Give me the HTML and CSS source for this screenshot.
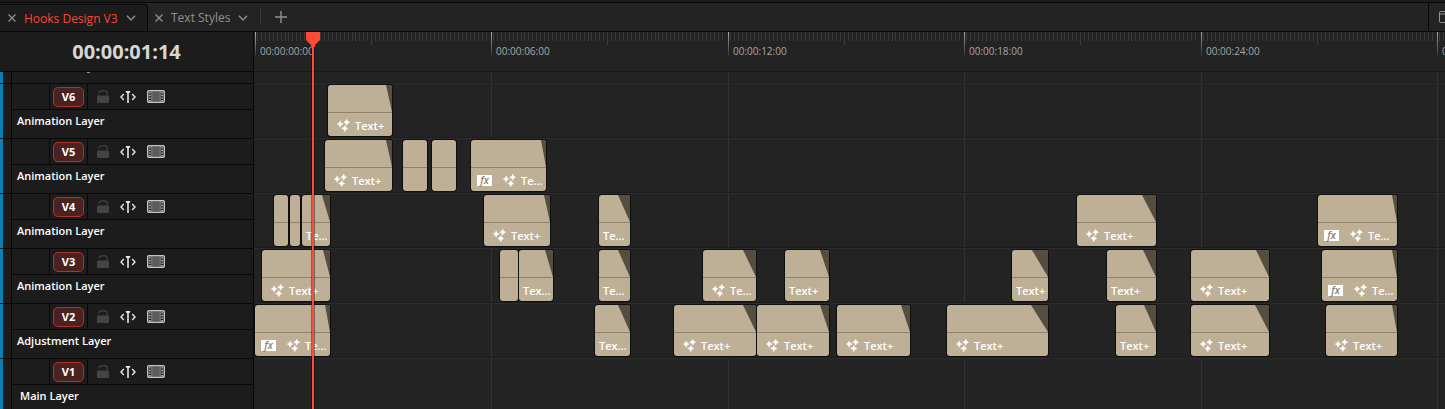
FILE: index.html
```
<!DOCTYPE html>
<html lang="en">
<head>
    <meta charset="UTF-8">
    <title>Timeline</title>
    <link rel="stylesheet" href="styles.css">
</head>
<body>
    <svg class="symbols" aria-hidden="true">
        <symbol id="close" viewBox="0 0 8 8"><path d="M.5 .5l7 7M7.5 .5l-7 7" stroke="currentColor" stroke-width="1.3"/></symbol>
        <symbol id="chevron" viewBox="0 0 10 6"><path d="M1 .8l4 4.2 4-4.2" fill="none" stroke="currentColor" stroke-width="1.3"/></symbol>
        <symbol id="plus" viewBox="0 0 12 12"><path d="M6 0v12M0 6h12" stroke="currentColor" stroke-width="1.4"/></symbol>
        <symbol id="window" viewBox="0 0 16 12"><path d="M.5 1.5a1 1 0 0 1 1-1h13a1 1 0 0 1 1 1v9a1 1 0 0 1-1 1h-13a1 1 0 0 1-1-1zM.5 3h15" fill="none" stroke="currentColor"/></symbol>
        <symbol id="lock" viewBox="0 0 12 13"><rect y="5.500" width="12" height="7.500" rx="1" fill="currentColor"/><path d="M2 3.400C2 1.600 3.200.8 4.500.8h3.500C9.400.8 10.200 1.700 10.200 3v2.500" fill="none" stroke="currentColor" stroke-width="1.2"/></symbol>
        <symbol id="autoselect" viewBox="0 0 16 12"><path d="M3.800 3L1 6l2.800 3M12.200 3L15 6l-2.800 3" fill="none" stroke="currentColor" stroke-width="1.4"/><path d="M5.800 0h4.400v1.200L8.800 2.200V12H7.200V2.200L5.800 1.200z" fill="currentColor"/></symbol>
        <symbol id="film" viewBox="0 0 18 13"><rect x=".7" y=".7" width="16.600" height="11.600" rx="1" fill="#1c1c1c" stroke="#c4c4c4" stroke-width="1.4"/><rect x="5" y="2" width="8" height="9" fill="#5c5c5c"/><path d="M4.700 1v11M13.300 1v11" stroke="#999" stroke-width=".8"/><path d="M2.900 2.200v9M15.100 2.200v9" stroke="#ddd" stroke-width="1.400" stroke-dasharray="1.400 1.200"/></symbol>
        <symbol id="sparkle" viewBox="0 0 13 13"><path id="star" d="M3.100 1.800Q3.600 4.600 6.300 5.100Q3.600 5.600 3.100 8.400Q2.600 5.600 -.1 5.100Q2.600 4.600 3.100 1.800z" fill="#fff" stroke="#fff" stroke-width=".3"/><use href="#star" x="6.600" y="-1.800"/><use href="#star" x="4.700" y="4.500"/></symbol>
    </svg>

    <nav class="tabs">
        <div class="tab active">
            <button aria-label="Close Hooks Design V3"><svg width="8" height="8"><use href="#close"/></svg></button>
            <button class="tab-name">Hooks Design V3</button>
            <button aria-label="Hooks Design V3 menu"><svg width="10" height="6"><use href="#chevron"/></svg></button>
        </div>
        <div class="tab">
            <button aria-label="Close Text Styles"><svg width="8" height="8"><use href="#close"/></svg></button>
            <button class="tab-name">Text Styles</button>
            <button aria-label="Text Styles menu"><svg width="10" height="6"><use href="#chevron"/></svg></button>
        </div>
        <button class="add-tab" aria-label="Add timeline"><svg width="12" height="12"><use href="#plus"/></svg></button>
        <div class="tab-tools">
            <button aria-label="Window options"><svg width="16" height="12"><use href="#window"/></svg></button>
        </div>
    </nav>

    <main class="editor">
        <section class="headers">
            <div class="timecode">00:00:01:14</div>
            <div class="header-list" id="headers">
                <div class="header-stub"></div>
            </div>
        </section>
        <section class="timeline" id="timeline">
            <svg class="ruler" id="ruler"></svg>
            <div class="track-stub"></div>
            <div class="tracks" id="tracks"></div>
            <div class="playhead">
                <svg width="16" height="15"><path d="M1 0h14v8l-5 5v2H6v-2L1 8z" fill="#ff4a38"/></svg>
            </div>
        </section>
    </main>

    <script>
        const SECONDS = 6;
        const STEP = 236.5;

        // clip: [start, end, width of the fade, label, icons]
        const tracks = [
            { id: 'V6', name: 'Animation Layer', clips: [
                [74, 138, 6, 'Text+', 'star']
            ] },
            { id: 'V5', name: 'Animation Layer', clips: [
                [71, 138, 6, 'Text+', 'star'], [149, 173], [178, 202], [217, 292, 5, 'Te...', 'fx']
            ] },
            { id: 'V4', name: 'Animation Layer', clips: [
                [20, 34], [36, 46], [48, 76, 8, 'Te...'], [230, 296, 6, 'Text+', 'star'],
                [345, 376, 12, 'Te...'], [823, 902, 14, 'Text+', 'star'], [1064, 1143, 5, 'Te...', 'fx']
            ] },
            { id: 'V3', name: 'Animation Layer', clips: [
                [8, 76, 7, 'Text+', 'star'], [246, 264], [265, 299, 8, 'Tex...'], [345, 376, 12, 'Te...'],
                [449, 502, 13, 'Te...', 'star'], [531, 575, 9, 'Text+'], [758, 794, 16, 'Text+'],
                [853, 902, 13, 'Text+'], [937, 1015, 13, 'Text+', 'star'], [1068, 1143, 5, 'Te...', 'fx']
            ] },
            { id: 'V2', name: 'Adjustment Layer', clips: [
                [1, 76, 5, 'Te...', 'fx'], [341, 376, 12, 'Tex...'], [420, 502, 13, 'Text+', 'star'],
                [503, 575, 9, 'Text+', 'star'], [583, 656, 9, 'Text+', 'star'], [693, 794, 17, 'Text+', 'star'],
                [862, 902, 12, 'Text+'], [937, 1015, 14, 'Text+', 'star'], [1072, 1143, 5, 'Text+', 'star']
            ] },
            { id: 'V1', name: 'Main Layer', main: true, clips: [] }
        ];

        function renderClip([start, end, fade, label, icons]) {
            const fadeHtml = fade ? `<div class="fade" style="width: ${fade}px"></div>` : '';
            const fx = icons === 'fx' ? '<span class="fx">fx</span>' : '';
            const star = icons ? '<svg width="13" height="13"><use href="#sparkle"/></svg>' : '';
            return `
                <div class="clip" style="left: ${start}px; width: ${end - start}px">
                    <div class="clip-body">${fadeHtml}</div>
                    <div class="clip-label ${icons || 'plain'}">${fx}${star}${label ? `<span>${label}</span>` : ''}</div>
                </div>`;
        }

        function renderHeader(track) {
            return `
                <div class="header">
                    <div class="controls">
                        <div class="target"><button>${track.id}</button></div>
                        <div class="toggles">
                            <button class="lock" aria-label="Lock ${track.id}"><svg width="12" height="13"><use href="#lock"/></svg></button>
                            <button aria-label="Auto select ${track.id}"><svg width="16" height="12"><use href="#autoselect"/></svg></button>
                            <button aria-label="Enable ${track.id}"><svg width="18" height="13"><use href="#film"/></svg></button>
                        </div>
                    </div>
                    <div class="name${track.main ? ' main-layer' : ''}">${track.name}</div>
                </div>`;
        }

        function renderRuler() {
            const width = document.getElementById('timeline').clientWidth;
            let html = '<defs><linearGradient id="tick" x2="0" y2="1"><stop stop-color="#aaa"/><stop offset="1" stop-color="#333"/></linearGradient></defs>';
            let lines = '';
            for (let i = 0; i * STEP < width; i++) {
                const x = Math.floor(i * STEP) + 1;
                const seconds = String(i * SECONDS).padStart(2, '0');
                for (let t = 1; t < 60; t++) {
                    const tick = Math.round(x + t * STEP / 60 - 2);
                    html += `<rect class="minor" x="${tick}" width="1" height="${t === 30 ? 13 : 9}"/>`;
                }
                html += `<rect x="${x}" width="1" height="24" fill="url(#tick)"/>`;
                html += `<text x="${x + 5}" y="23">00:00:${seconds}:00</text>`;
                if (i > 0) lines += `<div class="guide" style="left: ${x}px"></div>`;
            }
            document.getElementById('ruler').innerHTML = html;
            return lines;
        }

        document.getElementById('headers').innerHTML += tracks.map(renderHeader).join('');
        document.getElementById('tracks').innerHTML = renderRuler() + tracks.map(track =>
            `<div class="track">${track.clips.map(renderClip).join('')}</div>`).join('');
    </script>
</body>
</html>
```

FILE: styles.css
```
* {
    box-sizing: border-box;
}

body {
    margin: 0;
    height: 100vh;
    display: flex;
    flex-direction: column;
    overflow: hidden;
    background: #232323;
    color: #fff;
    font-family: "Open Sans", "Noto Sans", sans-serif;
    font-size: 12px;
}

button {
    display: flex;
    align-items: center;
    padding: 0;
    border: none;
    background: none;
    color: inherit;
    font: inherit;
    cursor: pointer;
}

svg {
    display: block;
    flex: none;
}

.symbols {
    position: absolute;
    width: 0;
    height: 0;
}

/* tabs */

.tabs {
    flex: none;
    display: flex;
    height: 32px;
    border-top: 2px solid #1c1c1c;
    border-bottom: 1px solid #080808;
    box-shadow: inset 0 1px #080808;
    color: #919191;
}

.tab {
    display: flex;
    align-items: center;
    gap: 8px;
    margin: 2px 0 0;
    padding: 0 10px 0 7px;
}

.tab.active {
    width: 148px;
    padding-left: 8px;
    border: 1px solid #080808;
    border-width: 1px 1px 0 0;
    border-radius: 0 4px 0 0;
    background: #1c1c1c;
}

.tab.active .tab-name {
    color: #ff4435;
}

.tab-name {
    font-weight: 500;
    white-space: nowrap;
}

.add-tab {
    align-self: center;
    height: 17px;
    margin-left: 2px;
    padding-left: 14px;
    border-left: 1px solid #383838;
}

.tab-tools {
    display: flex;
    width: 17px;
    margin-left: auto;
    padding-left: 10px;
    border-left: 1px solid #080808;
    overflow: hidden;
}

/* track headers */

.editor {
    flex: 1;
    display: flex;
    min-height: 0;
}

.headers {
    flex: none;
    display: flex;
    flex-direction: column;
    width: 254px;
    border-right: 1px solid #080808;
    background: #1c1c1c;
}

.timecode {
    height: 40px;
    border-bottom: 1px solid #080808;
    color: #d6d6d6;
    font-size: 20px;
    font-weight: 700;
    line-height: 40px;
    text-align: center;
}

.header-list {
    flex: 1;
    overflow: hidden;
}

.header-stub,
.header {
    padding-left: 11px;
    background: linear-gradient(#0b80b5, #0b80b5) left / 3px 100% no-repeat;
}

.header-stub {
    height: 11px;
}

.header-stub::before {
    content: "";
    display: block;
    height: 100%;
    border-left: 1px solid #080808;
    background: linear-gradient(#999, #999) 75px 0 / 3px 1px no-repeat;
}

.header {
    height: 55px;
    border-top: 1px solid #080808;
}

.controls {
    display: flex;
    height: 26px;
    border-left: 1px solid #080808;
    border-bottom: 1px solid #080808;
}

.target {
    display: flex;
    align-items: center;
    justify-content: center;
    width: 39px;
    margin-left: 37px;
    border: 1px solid #080808;
    border-width: 0 1px;
}

.target button {
    justify-content: center;
    width: 31px;
    height: 20px;
    border: 1px solid #a8362f;
    border-radius: 5px;
    background: #4c2220;
    font-size: 11px;
    font-weight: 700;
}

.toggles {
    display: flex;
    align-items: center;
    gap: 11px;
    padding-left: 9px;
    color: #e6e6e6;
}

.lock {
    color: #444;
}

.name {
    height: 28px;
    padding-left: 5px;
    border-left: 1px solid #080808;
    font-size: 11px;
    font-weight: 600;
    line-height: 22px;
}

.main-layer {
    padding-left: 8px;
}

/* timeline */

.timeline {
    position: relative;
    flex: 1;
    min-width: 0;
    overflow: hidden;
}

.ruler {
    width: 100%;
    height: 40px;
    border-bottom: 1px solid #1b1b1b;
}

.ruler text {
    fill: #a8a8a8;
    font-size: 10px;
    font-weight: 500;
}

.minor {
    fill: #3a3a3a;
}

.track-stub {
    height: 11px;
}

.tracks {
    position: relative;
}

.track {
    position: relative;
    height: 55px;
    border-top: 1px solid #2c2c2c;
    box-shadow: 0 -1px #1d1d1d;
}

.guide {
    position: absolute;
    top: -11px;
    bottom: 0;
    width: 1px;
    background: #333;
}

.clip {
    position: absolute;
    top: 1px;
    height: 51px;
    border-radius: 3px;
    background: #beb096;
    box-shadow: 0 0 0 1px #0f0f0f;
    overflow: hidden;
}

.clip-body {
    display: flex;
    justify-content: flex-end;
    height: 28px;
    border-bottom: 1px solid #8d826d;
}

.fade {
    background: #554d3f;
    clip-path: polygon(0 0, 100% 0, 100% 100%);
}

.clip-label {
    display: flex;
    align-items: center;
    height: 25px;
    padding-left: 4px;
    font-size: 11px;
    font-weight: 600;
    line-height: 25px;
    white-space: nowrap;
}

.clip-label.star {
    gap: 5px;
    padding-left: 9px;
}

.clip-label.fx {
    gap: 5px;
    padding-left: 6px;
}

span.fx {
    width: 15px;
    height: 11px;
    margin-right: 6px;
    background: #fff;
    color: #8d826d;
    font-size: 10px;
    font-style: italic;
    line-height: 10px;
    text-align: center;
}

.playhead {
    position: absolute;
    top: 0;
    bottom: 0;
    left: 51px;
    width: 16px;
    background: linear-gradient(#ff4a38, #ff4a38) center / 2px 100% no-repeat, linear-gradient(#0006, #0006) center / 4px 100% no-repeat;
}
```
